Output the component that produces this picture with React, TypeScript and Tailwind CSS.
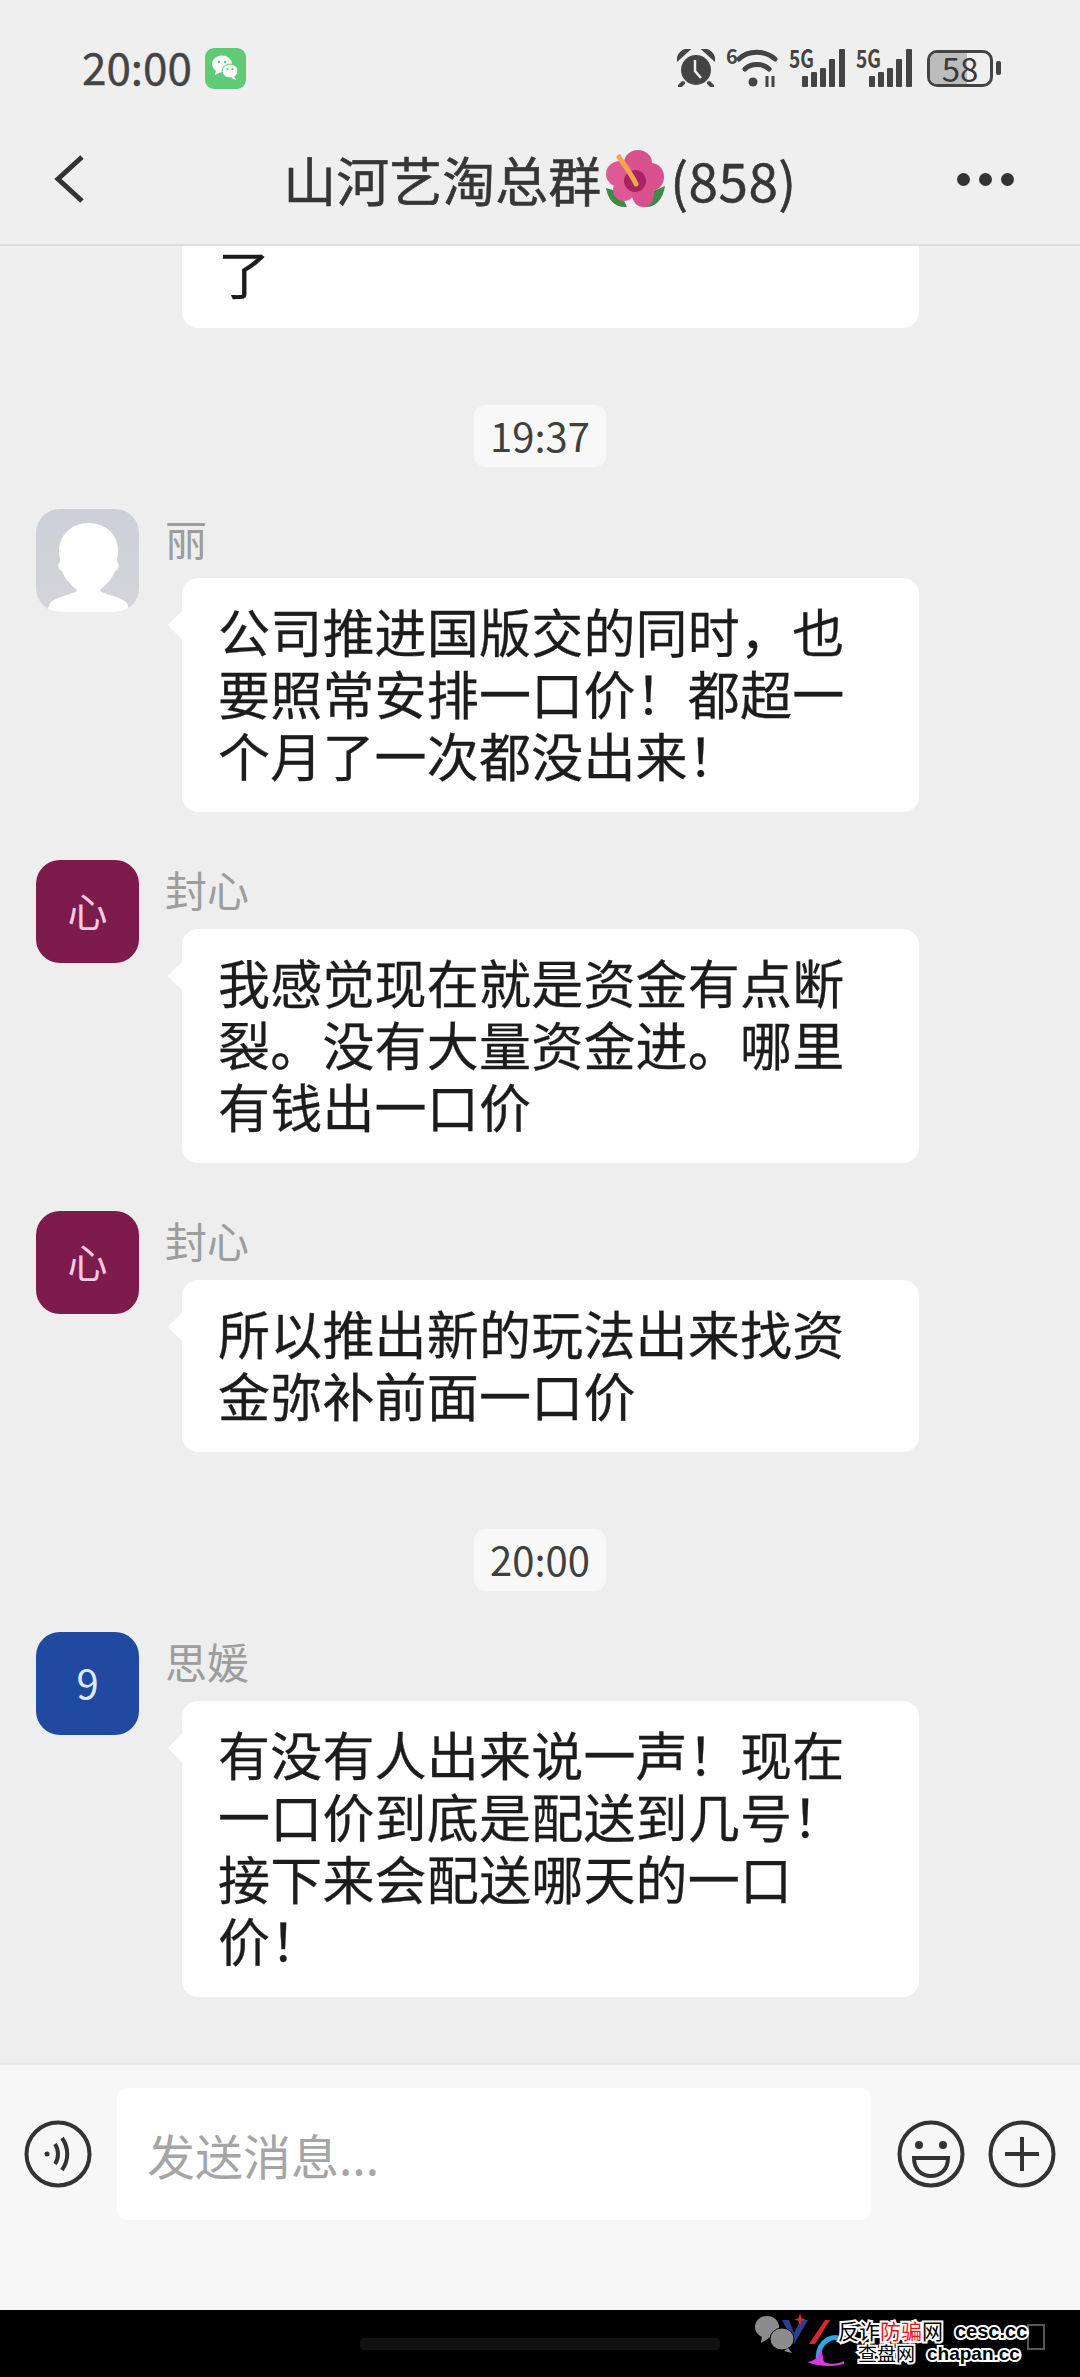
const cjk = "font-['Noto_Sans_CJK_SC','Noto_Sans',sans-serif]";

type Msg = {
  name: string;
  lines: string[];
  avatar: "ghost" | "heart" | "nine";
};

const firstGroup: Msg[] = [
  { name: "丽", avatar: "ghost", lines: ["公司推进国版交的同时，也", "要照常安排一口价！都超一", "个月了一次都没出来！"] },
  { name: "封心", avatar: "heart", lines: ["我感觉现在就是资金有点断", "裂。没有大量资金进。哪里", "有钱出一口价"] },
  { name: "封心", avatar: "heart", lines: ["所以推出新的玩法出来找资", "金弥补前面一口价"] },
];

const lastMsg: Msg = {
  name: "思媛",
  avatar: "nine",
  lines: ["有没有人出来说一声！现在", "一口价到底是配送到几号！", "接下来会配送哪天的一口", "价！"],
};

function Avatar({ kind }: { kind: Msg["avatar"] }) {
  if (kind === "ghost") {
    return (
      <div className="w-[103px] h-[103px] shrink-0 rounded-[24px] overflow-hidden bg-gradient-to-b from-[#cdd0d9] to-[#d3d5da]">
        <svg viewBox="0 0 103 103" className="w-full h-full">
          <path
            d="M52 14c17 0 30 11 30 27 0 5-1 9-1 12 3 2 2 8-2 9-3 8-9 14-14 18l-1 2c6 4 20 5 27 12l3 9H11l3-9c7-7 21-8 27-12l-1-2c-5-4-11-10-14-18-4-1-5-7-2-9 0-3-1-6-1-11 0-16 13-28 29-28z"
            fill="#ffffff"
          />
        </svg>
      </div>
    );
  }
  const isHeart = kind === "heart";
  return (
    <div
      className={`w-[103px] h-[103px] shrink-0 rounded-[24px] flex items-center justify-center pb-[3px] text-[40px] ${
        isHeart ? "bg-[#7d1b4c] text-[#f6cbe3]" : "bg-[#1f4a9f] text-[#dfeaff]"
      }`}
    >
      {isHeart ? "心" : "9"}
    </div>
  );
}

function Bubble({ lines, tail = true, extra = "" }: { lines: string[]; tail?: boolean; extra?: string }) {
  return (
    <div className={`relative w-[737px] bg-white rounded-[16px] pl-[36px] text-[52px] leading-[62px] text-[#1c1c1c] [-webkit-text-stroke:0.3px_#1c1c1c] ${extra}`}>
      {tail && <div className="absolute left-[-10px] top-[37px] w-[20px] h-[20px] rotate-45 bg-white" />}
      {lines.map((line) => (
        <div key={line} className="relative whitespace-nowrap tracking-[0.2px]">
          {line}
        </div>
      ))}
    </div>
  );
}

function Message({ msg, top }: { msg: Msg; top: string }) {
  return (
    <div className={`flex pl-[36px] gap-[26px] ${top}`}>
      <Avatar kind={msg.avatar} />
      <div>
        <div className="h-[69px] leading-[58px] text-[42px] text-[#9d9d9d]">{msg.name}</div>
        <Bubble lines={msg.lines} extra="ml-[17px] pt-[22px] pb-[26px]" />
      </div>
    </div>
  );
}

function TimePill({ label, top }: { label: string; top: string }) {
  return (
    <div className={`flex justify-center ${top}`}>
      <div className="w-[132px] h-[62px] rounded-[12px] bg-[#f8f8f8] flex items-center justify-center pb-[2px] text-[40px] text-[#404040]">
        {label}
      </div>
    </div>
  );
}

function Signal() {
  return (
    <svg width="56" height="38" viewBox="0 0 56 38" fill="#444444" className="overflow-visible">
      <text x="0" y="19" fontSize="25" fontWeight="700" textLength="25" lengthAdjust="spacingAndGlyphs">5G</text>
      <rect x="13" y="27" width="6" height="11" rx="1" />
      <rect x="22" y="23" width="6" height="15" rx="1" />
      <rect x="31" y="19" width="6" height="19" rx="1" />
      <rect x="40" y="10" width="6" height="28" rx="1" />
      <rect x="50" y="0" width="6" height="38" rx="1" />
    </svg>
  );
}

function StatusBar() {
  return (
    <div className="h-[136px] flex items-center justify-between pl-[82px] pr-[79px]">
      <div className="flex items-center gap-[13px]">
        <span className="-mt-[4px] text-[44px] leading-none text-[#444444] [-webkit-text-stroke:0.4px_#444444]">20:00</span>
        <div className="w-[41px] h-[41px] rounded-[9px] bg-[#5fcb76] flex items-center justify-center">
          <svg width="30" height="30" viewBox="0 0 30 30" fill="#ffffff">
            <ellipse cx="12" cy="11" rx="10" ry="8.5" />
            <path d="M6 17l-1 5 6-3z" />
            <ellipse cx="20" cy="18" rx="8" ry="7" stroke="#5fcb76" strokeWidth="1" />
            <path d="M24 23l2 4-5-2z" />
            <circle cx="9" cy="9" r="1.2" fill="#5fcb76" />
            <circle cx="15" cy="9" r="1.2" fill="#5fcb76" />
            <circle cx="17.500" cy="16" r="1.1" fill="#5fcb76" />
            <circle cx="22.500" cy="16" r="1.1" fill="#5fcb76" />
          </svg>
        </div>
      </div>
      <div className="flex items-center gap-[11px]">
        <svg width="38" height="38" viewBox="0 0 38 38" fill="#444444">
          <circle cx="19" cy="21" r="15" />
          <path d="M1 10c1-5 5-9 10-9L1 10zM37 10c-1-5-5-9-10-9l10 9z" stroke="#444444" strokeWidth="3" />
          <path d="M6 34l-3 3M32 34l3 3" stroke="#444444" strokeWidth="4" strokeLinecap="round" />
          <path d="M18 11v11l6 7" stroke="#eeeeee" strokeWidth="2.500" fill="none" />
        </svg>
        <svg width="52" height="38" viewBox="0 0 52 38" fill="none" stroke="#444444" strokeWidth="5" className="overflow-visible">
          <text x="0" y="15" fontSize="20" fontWeight="700" fill="#444444" stroke="none">6</text>
          <path d="M13 10c9-9 26-9 36 0" strokeLinecap="round" />
          <path d="M19 20c6-6 18-6 24 0" strokeLinecap="round" />
          <circle cx="27" cy="33" r="4.500" fill="#444444" stroke="none" />
          <path d="M41 27v11M47 27v11" strokeWidth="3" />
        </svg>
        <Signal />
        <Signal />
        <div className="flex items-center gap-[3px] ml-[4px]">
          <div className="relative w-[66px] h-[37px] rounded-[10px] border-[3px] border-[#444444] overflow-hidden">
            <div className="w-[37px] h-full bg-[#bcbcbc]" />
            <span className="absolute inset-0 flex items-center justify-center text-[33px] leading-none text-[#3a3a3a]">58</span>
          </div>
          <div className="w-[5px] h-[14px] rounded-[2px] bg-[#444444]" />
        </div>
      </div>
    </div>
  );
}

function Hibiscus() {
  return (
    <svg width="61" height="58" viewBox="0 0 61 58" className="mx-[4px] shrink-0">
      <path d="M1 38l14 4 7 15C10 58 3 50 1 38zM60 36l-14 6-7 15c12 1 19-8 21-21z" fill="#3f8b45" />
      <ellipse cx="33" cy="13" rx="14" ry="13" fill="#d9508e" />
      <ellipse cx="15" cy="24" rx="14" ry="13" fill="#dd5a96" />
      <ellipse cx="46" cy="27" rx="13" ry="14" fill="#d9508e" />
      <ellipse cx="19" cy="40" rx="11" ry="11" fill="#dd5a96" />
      <ellipse cx="38" cy="44" rx="11" ry="13" fill="#d9508e" />
      <circle cx="30" cy="31" r="11" fill="#a82265" />
      <path d="M14 7c5 8 13 18 17 27" stroke="#f3a64a" strokeWidth="5" strokeLinecap="round" fill="none" />
    </svg>
  );
}

function NavBar() {
  return (
    <div className="h-[109px] pb-[23px] grid grid-cols-[1fr_auto_1fr] items-center">
      <div className="pl-[54px]">
        <svg width="30" height="48" viewBox="0 0 30 48" fill="none" stroke="#333333" strokeWidth="5">
          <path d="M28 2L4 24l24 22" />
        </svg>
      </div>
      <div className="flex items-center text-[53px] leading-none text-[#363636] [-webkit-text-stroke:0.5px_#363636]">
        <span>山河艺淘总群</span>
        <Hibiscus />
        <span className="tracking-[0.5px]">(858)</span>
      </div>
      <div className="flex justify-end gap-[9px] pr-[66px]">
        <div className="w-[13px] h-[13px] rounded-full bg-[#333333]" />
        <div className="w-[13px] h-[13px] rounded-full bg-[#333333]" />
        <div className="w-[13px] h-[13px] rounded-full bg-[#333333]" />
      </div>
    </div>
  );
}

function InputBar() {
  return (
    <div className="h-[247px] bg-[#f7f7f7] border-t-2 border-[#e9e9e9] pt-[23px] pl-[24px] flex items-start">
      <div className="flex items-center h-[132px]">
        <svg width="68" height="68" viewBox="0 0 68 68" fill="none" stroke="#333333" strokeWidth="4">
          <circle cx="34" cy="34" r="31.500" />
          <circle cx="23" cy="34" r="2.500" fill="#333333" stroke="none" />
          <path d="M31 24c4 6 4 14 0 20" />
          <path d="M38 18c7 10 7 22 0 32" />
        </svg>
        <div className="ml-[25px] w-[754px] h-[132px] rounded-[10px] bg-white flex items-center pl-[30px] text-[48px] text-[#a5a5a5]">
          发送消息...
        </div>
        <svg width="68" height="68" viewBox="0 0 68 68" fill="none" stroke="#333333" strokeWidth="4" className="ml-[26px]">
          <circle cx="34" cy="34" r="31.500" />
          <circle cx="22" cy="25" r="4" fill="#333333" stroke="none" />
          <circle cx="46" cy="25" r="4" fill="#333333" stroke="none" />
          <path d="M17 38h34c0 11-7 18-17 18s-17-7-17-18z" />
        </svg>
        <svg width="68" height="68" viewBox="0 0 68 68" fill="none" stroke="#333333" strokeWidth="4" className="ml-[23px]">
          <circle cx="34" cy="34" r="31.500" />
          <path d="M17 34h34M34 17v34" />
        </svg>
      </div>
    </div>
  );
}

function Footer() {
  const outlined = "absolute whitespace-nowrap leading-none [-webkit-text-stroke:4px_#ffffff] [paint-order:stroke_fill]";
  return (
    <div className="relative h-[67px] bg-black overflow-hidden">
      <div className="absolute left-[360px] top-[28px] w-[360px] h-[12px] rounded-[4px] bg-[#111111]" />
      <div className="absolute left-[1027px] top-[14px] w-[18px] h-[26px] border-2 border-[#555555]" />
      <svg width="95" height="67" viewBox="0 0 95 67" className="absolute left-[755px] top-0">
        <ellipse cx="12" cy="17" rx="12" ry="11" fill="#8c8c8c" />
        <path d="M7 26l-1 7 8-5z" fill="#8c8c8c" />
        <path d="M27 10l12 24 14-24h-7l-7 13-5-13z" fill="#2c3e8f" />
        <path d="M54 34L70 10h5L60 34z" fill="#d8282c" />
        <path d="M45 3l1.500 5 4 1.500-4 1.500-1.500 5-1.500-5-4-1.500 4-1.500z" fill="#d8282c" />
        <ellipse cx="27" cy="29" rx="12" ry="11" fill="#8c8c8c" stroke="#000000" strokeWidth="1" />
        <path d="M33 38l4 5-8-2z" fill="#8c8c8c" />
        <path d="M88 30c-10-6-24 0-25 18" stroke="#2ca7e0" strokeWidth="5" fill="none" />
        <path d="M52 52c8-1 12-5 14-14l3 14c6 3 14 2 20-1v3c-10 3-26 3-37-2z" fill="#d93ae0" />
      </svg>
      <span className={`${outlined} left-[838px] top-[10px] text-[21px] text-black`}>
        反诈<span className="text-[#e3181d]">防骗</span>网
      </span>
      <span className={`${outlined} left-[955px] top-[11px] text-[20px] font-bold text-black font-['Liberation_Sans',sans-serif]`}>
        cesc.cc
      </span>
      <span className={`${outlined} left-[858px] top-[33px] text-[19px] text-black`}>查盘网</span>
      <span className={`${outlined} left-[927px] top-[34px] text-[19px] font-bold text-black font-['Liberation_Sans',sans-serif]`}>
        chapan.cc
      </span>
    </div>
  );
}

export default function App() {
  return (
    <div className={`w-[1080px] h-[2377px] flex flex-col bg-[#eeeeee] overflow-hidden ${cjk}`}>
      <div className="h-[246px] shrink-0 border-b-2 border-[#dedede] bg-[#efefef]">
        <StatusBar />
        <NavBar />
      </div>

      <div className="flex-1 min-h-0 overflow-hidden">
        <div className="pl-[182px] -mt-[4px]">
          <Bubble lines={["了"]} tail={false} extra="pb-[24px] rounded-t-none" />
        </div>
        <TimePill label="19:37" top="mt-[77px]" />
        <Message msg={firstGroup[0]} top="mt-[42px]" />
        <Message msg={firstGroup[1]} top="mt-[48px]" />
        <Message msg={firstGroup[2]} top="mt-[48px]" />
        <TimePill label="20:00" top="mt-[77px]" />
        <Message msg={lastMsg} top="mt-[41px]" />
      </div>

      <InputBar />
      <Footer />
    </div>
  );
}
